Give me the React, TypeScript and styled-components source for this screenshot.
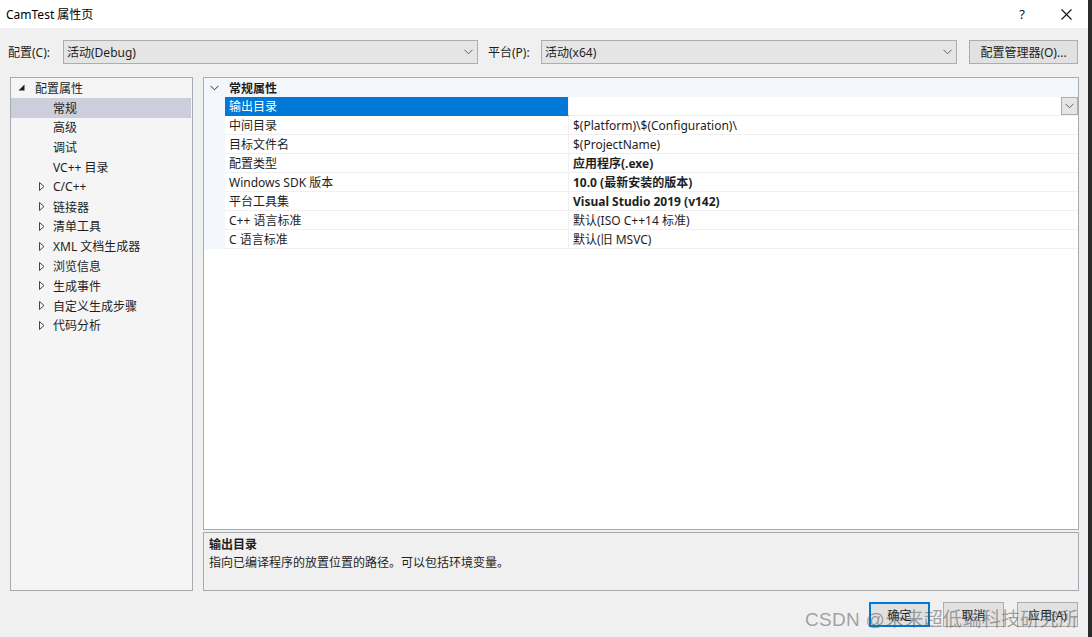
import styled, { createGlobalStyle } from 'styled-components'

const GlobalStyle = createGlobalStyle`
  html, body {
    margin: 0;
    padding: 0;
    background: #f0f0f0;
  }
  body {
    font-family: "Noto Sans", "Noto Sans CJK SC", sans-serif;
    font-size: 12px;
    color: #1e1e1e;
  }
`

const Window = styled.div`
  position: relative;
  width: 1092px;
  height: 637px;
  box-sizing: border-box;
  border-right: 4px solid #2a2a2a;
  background: #f0f0f0;
  display: flex;
  flex-direction: column;
  overflow: hidden;
`

const TitleBar = styled.div`
  height: 28px;
  background: #ffffff;
  display: flex;
  align-items: center;
  padding-left: 6px;
  font-size: 12px;
  color: #000;
`

const Title = styled.div`
  flex: 1;
`

const TitleButton = styled.div`
  width: 44px;
  height: 28px;
  display: flex;
  align-items: center;
  justify-content: center;
  font-size: 13px;
  color: #111;
`

const ConfigRow = styled.div`
  display: flex;
  align-items: center;
  height: 24px;
  margin-top: 12px;
  padding-left: 8px;
`

const FieldLabel = styled.div<{ $width: number; $gap?: number }>`
  width: ${(p) => p.$width}px;
  margin-left: ${(p) => p.$gap ?? 0}px;
  flex-shrink: 0;
`

const Combo = styled.div<{ $width: number }>`
  width: ${(p) => p.$width}px;
  height: 24px;
  box-sizing: border-box;
  border: 1px solid #adadad;
  background: #e5e5e5;
  display: flex;
  align-items: center;
  padding-left: 3px;
  flex-shrink: 0;
`

const ComboText = styled.div`
  flex: 1;
`

const ComboArrow = styled.div`
  width: 18px;
  display: flex;
  justify-content: center;
  color: #606060;
`

const ManagerButton = styled.div`
  margin-left: 12px;
  width: 109px;
  height: 24px;
  box-sizing: border-box;
  border: 1px solid #adadad;
  background: #e1e1e1;
  display: flex;
  align-items: center;
  justify-content: center;
`

const Main = styled.div`
  display: flex;
  margin-top: 13px;
  padding-left: 10px;
  height: 514px;
  gap: 10px;
`

const TreePanel = styled.div`
  width: 183px;
  box-sizing: border-box;
  border: 1px solid #a5abb3;
  background: #f5f5f5;
`

const TreeRow = styled.div<{ $level: number; $selected?: boolean }>`
  height: 19.8px;
  display: flex;
  align-items: center;
  padding-left: ${(p) => (p.$level === 0 ? 3 : 24)}px;
  background: ${(p) => (p.$selected ? '#cccedb' : 'transparent')};
  margin-right: 1px;
`

const TreeToggle = styled.div<{ $level: number }>`
  width: 14px;
  height: 20px;
  display: flex;
  align-items: center;
  justify-content: center;
  margin-right: ${(p) => (p.$level === 0 ? 7 : 4)}px;
`

const RightColumn = styled.div`
  width: 876px;
  display: flex;
  flex-direction: column;
  gap: 2px;
`

const Grid = styled.div`
  height: 453px;
  box-sizing: border-box;
  border: 1px solid #a5abb3;
  background: #ffffff;
  display: flex;
  flex-direction: column;
`

const CategoryRow = styled.div`
  height: 19px;
  display: flex;
  align-items: center;
  background: #f3f6fb;
  font-weight: 700;
`

const CategoryTitle = styled.span`
  padding-left: 4px;
`

const Gutter = styled.div`
  width: 21px;
  align-self: stretch;
  display: flex;
  align-items: center;
  justify-content: center;
  background: #f3f6fb;
  flex-shrink: 0;
`

const PropRow = styled.div`
  height: 19px;
  display: flex;
  align-items: stretch;
`

const PropName = styled.div<{ $selected?: boolean }>`
  width: 344px;
  box-sizing: border-box;
  padding-left: 4px;
  display: flex;
  align-items: center;
  background: ${(p) => (p.$selected ? '#0078d7' : '#ffffff')};
  color: ${(p) => (p.$selected ? '#ffffff' : '#1e1e1e')};
  border-bottom: 1px solid ${(p) => (p.$selected ? '#0078d7' : '#f0f0f0')};
  border-right: 1px solid #f0f0f0;
`

const PropValue = styled.div<{ $bold?: boolean }>`
  flex: 1;
  box-sizing: border-box;
  padding-left: 4px;
  display: flex;
  align-items: center;
  font-weight: ${(p) => (p.$bold ? 700 : 400)};
  border-bottom: 1px solid #f0f0f0;
`

const ValueDrop = styled.div`
  margin-left: auto;
  width: 17px;
  height: 18px;
  box-sizing: border-box;
  border: 1px solid #adadad;
  background: #e5e5e5;
  display: flex;
  align-items: center;
  justify-content: center;
`

const Description = styled.div`
  flex: 1;
  box-sizing: border-box;
  border: 1px solid #a5abb3;
  background: #f0f0f0;
  padding: 3px 5px;
  line-height: 18px;
`

const DescTitle = styled.div`
  font-weight: 700;
`

const Footer = styled.div`
  display: flex;
  justify-content: flex-end;
  gap: 13px;
  padding-right: 10px;
  margin-top: 11px;
`

const DialogButton = styled.div<{ $primary?: boolean }>`
  width: 61px;
  height: 25px;
  box-sizing: border-box;
  border: ${(p) => (p.$primary ? '2px solid #0078d7' : '1px solid #adadad')};
  background: #e1e1e1;
  display: flex;
  align-items: center;
  justify-content: center;
`

const Watermark = styled.div`
  position: absolute;
  left: 805px;
  top: 604px;
  font-size: 19px;
  font-family: "Liberation Sans", "Noto Sans CJK SC", sans-serif;
  color: rgba(90, 90, 90, 0.55);
  white-space: nowrap;
  pointer-events: none;
  letter-spacing: 0.3px;
`

const Chevron = ({ color = '#606060' }: { color?: string }) => (
  <svg width="9" height="6" viewBox="0 0 9 6">
    <path d="M0.5 0.8 L4.5 4.8 L8.5 0.8" fill="none" stroke={color} strokeWidth="1" />
  </svg>
)

const Expanded = () => (
  <svg width="7" height="7" viewBox="0 0 7 7">
    <path d="M6.5 0.5 L6.5 6.5 L0.5 6.5 Z" fill="#1e1e1e" />
  </svg>
)

const Collapsed = () => (
  <svg width="6" height="9" viewBox="0 0 6 9">
    <path d="M0.5 0.5 L5 4.5 L0.5 8.5 Z" fill="none" stroke="#444" strokeWidth="1" />
  </svg>
)

type TreeItem = { label: string; level: number; toggle?: 'open' | 'closed'; selected?: boolean }

const tree: TreeItem[] = [
  { label: '配置属性', level: 0, toggle: 'open' },
  { label: '常规', level: 1, selected: true },
  { label: '高级', level: 1 },
  { label: '调试', level: 1 },
  { label: 'VC++ 目录', level: 1 },
  { label: 'C/C++', level: 1, toggle: 'closed' },
  { label: '链接器', level: 1, toggle: 'closed' },
  { label: '清单工具', level: 1, toggle: 'closed' },
  { label: 'XML 文档生成器', level: 1, toggle: 'closed' },
  { label: '浏览信息', level: 1, toggle: 'closed' },
  { label: '生成事件', level: 1, toggle: 'closed' },
  { label: '自定义生成步骤', level: 1, toggle: 'closed' },
  { label: '代码分析', level: 1, toggle: 'closed' },
]

const props = [
  { name: '输出目录', value: '', selected: true },
  { name: '中间目录', value: '$(Platform)\\$(Configuration)\\' },
  { name: '目标文件名', value: '$(ProjectName)' },
  { name: '配置类型', value: '应用程序(.exe)', bold: true },
  { name: 'Windows SDK 版本', value: '10.0 (最新安装的版本)', bold: true },
  { name: '平台工具集', value: 'Visual Studio 2019 (v142)', bold: true },
  { name: 'C++ 语言标准', value: '默认(ISO C++14 标准)' },
  { name: 'C 语言标准', value: '默认(旧 MSVC)' },
]

export default function App() {
  return (
    <>
      <GlobalStyle />
      <Window>
        <TitleBar>
          <Title>CamTest 属性页</Title>
          <TitleButton>?</TitleButton>
          <TitleButton>
            <svg width="11" height="11" viewBox="0 0 11 11">
              <path d="M0.5 0.5 L10.5 10.5 M10.5 0.5 L0.5 10.5" stroke="#111" strokeWidth="1.1" />
            </svg>
          </TitleButton>
        </TitleBar>

        <ConfigRow>
          <FieldLabel $width={55}>配置(C):</FieldLabel>
          <Combo $width={415}>
            <ComboText>活动(Debug)</ComboText>
            <ComboArrow>
              <Chevron />
            </ComboArrow>
          </Combo>
          <FieldLabel $width={53} $gap={10}>平台(P):</FieldLabel>
          <Combo $width={416}>
            <ComboText>活动(x64)</ComboText>
            <ComboArrow>
              <Chevron />
            </ComboArrow>
          </Combo>
          <ManagerButton>配置管理器(O)...</ManagerButton>
        </ConfigRow>

        <Main>
          <TreePanel>
            {tree.map((t) => (
              <TreeRow key={t.label} $level={t.level} $selected={t.selected}>
                <TreeToggle $level={t.level}>
                  {t.toggle === 'open' && <Expanded />}
                  {t.toggle === 'closed' && <Collapsed />}
                </TreeToggle>
                {t.label}
              </TreeRow>
            ))}
          </TreePanel>

          <RightColumn>
            <Grid>
              <CategoryRow>
                <Gutter>
                  <Chevron color="#333" />
                </Gutter>
                <CategoryTitle>常规属性</CategoryTitle>
              </CategoryRow>
              {props.map((p) => (
                <PropRow key={p.name}>
                  <Gutter />
                  <PropName $selected={p.selected}>{p.name}</PropName>
                  <PropValue $bold={p.bold}>
                    {p.value}
                    {p.selected && (
                      <ValueDrop>
                        <Chevron />
                      </ValueDrop>
                    )}
                  </PropValue>
                </PropRow>
              ))}
            </Grid>
            <Description>
              <DescTitle>输出目录</DescTitle>
              <div>指向已编译程序的放置位置的路径。可以包括环境变量。</div>
            </Description>
          </RightColumn>
        </Main>

        <Footer>
          <DialogButton $primary>确定</DialogButton>
          <DialogButton>取消</DialogButton>
          <DialogButton>应用(A)</DialogButton>
        </Footer>

        <Watermark>CSDN @未来超低端科技研究所</Watermark>
      </Window>
    </>
  )
}
